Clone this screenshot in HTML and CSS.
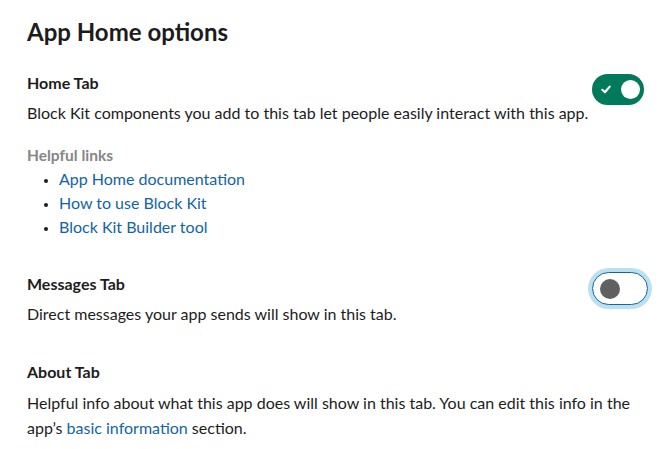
FILE: index.html
```html
<!DOCTYPE html>
<html lang="en">
<head>
<meta charset="utf-8">
<title>App Home options</title>
<link rel="stylesheet" href="styles.css">
</head>
<body>
<main class="page">
  <h1 class="title">App Home options</h1>

  <section class="section">
    <h2 class="section-title">Home Tab</h2>
    <button class="toggle toggle-on" aria-pressed="true">
      <svg class="check" width="10" height="9" viewBox="0 0 10 9"><path d="M1.3 4.8 L3.9 7.2 L8.7 1.6" fill="none" stroke="#fff" stroke-width="2.2" stroke-linecap="round" stroke-linejoin="round"/></svg>
      <span class="knob"></span>
    </button>
    <div class="section-body">
      <p class="desc">Block Kit components you add to this tab let people easily interact with this app.</p>
      <div class="links">
        <div class="links-title">Helpful links</div>
        <ul class="link-list">
          <li><a href="#">App Home documentation</a></li>
          <li><a href="#">How to use Block Kit</a></li>
          <li><a href="#">Block Kit Builder tool</a></li>
        </ul>
      </div>
    </div>
  </section>

  <section class="section">
    <h2 class="section-title">Messages Tab</h2>
    <button class="toggle toggle-off" aria-pressed="false">
      <span class="knob"></span>
    </button>
    <div class="section-body">
      <p class="desc">Direct messages your app sends will show in this tab.</p>
    </div>
  </section>

  <section class="section section-about">
    <h2 class="section-title">About Tab</h2>
    <div class="section-body">
      <p class="desc">Helpful info about what this app does will show in this tab. You can edit this info in the app’s <a href="#">basic information</a> section.</p>
    </div>
  </section>
</main>
</body>
</html>
```

FILE: styles.css
```css
html, body {
  margin: 0;
  padding: 0;
  background: #ffffff;
}

body {
  font-family: Lato, "Noto Sans", sans-serif;
  color: #1d1c1d;
  font-size: 16px;
  line-height: 24px;
}

.page {
  padding: 17px 22px 0 27px;
}

.title {
  margin: 0;
  font-size: 24px;
  line-height: 30px;
  font-weight: 700;
}

.section {
  display: grid;
  grid-template-columns: 1fr auto;
  grid-template-rows: 24px auto;
  margin-top: 33px;
}

.section:first-of-type {
  margin-top: 24px;
}

.section-about {
  margin-top: 34px;
}

.section-title {
  grid-column: 1;
  grid-row: 1;
  margin: 0;
  font-size: 16px;
  line-height: 24px;
  font-weight: 700;
}

.section-body {
  grid-column: 1 / -1;
  grid-row: 2;
  min-width: 0;
}

.desc {
  margin: 6px 0 0;
}

.section-about .desc {
  line-height: 25px;
}

a {
  color: #1264a3;
  text-decoration: none;
}

.links {
  margin-top: 18px;
}

.links-title {
  color: #868686;
  font-weight: 700;
  font-size: 15.5px;
}

.link-list {
  margin: 0;
  padding-left: 32px;
  list-style: disc;
}

.link-list li::marker {
  color: #1d1c1d;
  font-size: 13px;
}

.toggle {
  grid-column: 2;
  grid-row: 1 / 3;
  align-self: start;
  position: relative;
  z-index: 1;
  display: flex;
  align-items: center;
  box-sizing: border-box;
  border-radius: 999px;
  padding: 0;
  cursor: pointer;
  font: inherit;
}

.toggle-on {
  width: 52px;
  height: 31px;
  margin-top: 3px;
  margin-right: 4px;
  background: #007a5a;
  border: none;
  justify-content: space-between;
  padding: 0 4px 0 9px;
}

.toggle-on .check {
  display: block;
}

.toggle-on .knob {
  width: 19px;
  height: 19px;
  border-radius: 50%;
  background: #ffffff;
}

.toggle-off {
  width: 56px;
  height: 33px;
  margin-top: 0;
  background: #ffffff;
  border: 1px solid #1264a3;
  box-shadow: 0 0 0 4px rgba(29, 155, 209, 0.3);
  padding: 0 0 0 7px;
}

.toggle-off .knob {
  width: 20px;
  height: 20px;
  border-radius: 50%;
  background: #616061;
}
```
